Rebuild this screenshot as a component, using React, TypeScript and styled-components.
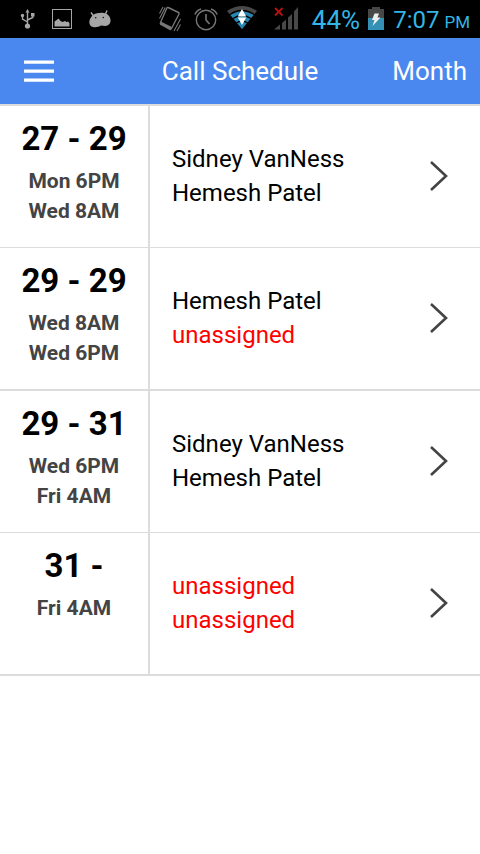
import React from "react";
import styled, { createGlobalStyle } from "styled-components";

const GlobalStyle = createGlobalStyle`
  *, *::before, *::after { box-sizing: border-box; }
  body {
    margin: 0;
    background: #fff;
    color: #000;
    font-family: Roboto, "Noto Sans", sans-serif;
  }
`;

const StatusBar = styled.div`
  display: flex;
  justify-content: space-between;
  align-items: center;
  height: 38px;
  padding: 0 10px 0 20px;
  background: #000;
  color: #33b5e5;
`;

const StatusGroup = styled.div<{ $gap: number; $raised?: boolean }>`
  display: flex;
  align-items: center;
  gap: ${(p) => p.$gap}px;
  padding-bottom: ${(p) => (p.$raised ? 2 : 0)}px;
`;

const Glyph = styled.svg`
  display: block;
  flex: none;
`;

const Battery = styled.div`
  display: flex;
  align-items: center;
  gap: 8px;
  margin-left: 4px;
`;

const Percent = styled.span`
  padding-top: 2px;
  font-size: 26px;
  line-height: 36px;
`;

const Clock = styled.div`
  display: flex;
  align-items: baseline;
  gap: 5px;
  padding-top: 2px;
  font-size: 24px;
  line-height: 36px;
`;

const Meridiem = styled.span`
  font-size: 17px;
  line-height: 20px;
`;

const Header = styled.header`
  display: grid;
  grid-template-columns: 1fr auto 1fr;
  align-items: center;
  height: 68px;
  padding: 0 13px 0 24px;
  background: #4a88ef;
  border-bottom: 2px solid #dcdcdc;
  color: #fff;
`;

const HeaderButton = styled.button<{ $end?: boolean }>`
  justify-self: ${(p) => (p.$end ? "end" : "start")};
  padding: 0;
  border: 0;
  background: none;
  color: inherit;
  font: inherit;
  font-size: 26px;
  line-height: 32px;
  cursor: pointer;
`;

const Title = styled.h1`
  margin: 0 11px 0 0;
  font-size: 26px;
  font-weight: 400;
  line-height: 32px;
`;

const ShiftList = styled.ul`
  margin: 0;
  padding: 0;
  list-style: none;
`;

const ShiftItem = styled.li`
  border-bottom: 1px solid #dcdcdc;

  &:nth-child(even) {
    border-bottom-width: 2px;
  }
`;

const ShiftButton = styled.button`
  display: grid;
  grid-template-columns: 150px 1fr;
  width: 100%;
  min-height: 141px;
  padding: 0;
  border: 0;
  background: #fff;
  color: inherit;
  font: inherit;
  text-align: left;
  cursor: pointer;
`;

const When = styled.span`
  display: flex;
  flex-direction: column;
  align-items: center;
  padding: 11px 0 10px;
  border-right: 2px solid #dcdcdc;
  font-weight: 700;
`;

const Days = styled.span`
  margin-bottom: 5px;
  font-size: 33px;
  line-height: 44px;
`;

const Time = styled.span`
  color: #444;
  font-size: 21px;
  line-height: 30px;
`;

const Who = styled.span`
  display: flex;
  align-items: center;
  justify-content: space-between;
  padding: 0 32px 2px 22px;
`;

const People = styled.span`
  display: flex;
  flex-direction: column;
`;

const Person = styled.span<{ $open: boolean }>`
  color: ${(p) => (p.$open ? "#f00" : "#000")};
  font-size: 24px;
  line-height: 34px;
`;

const shifts = [
  { days: "27 - 29", times: ["Mon 6PM", "Wed 8AM"], people: ["Sidney VanNess", "Hemesh Patel"] },
  { days: "29 - 29", times: ["Wed 8AM", "Wed 6PM"], people: ["Hemesh Patel", null] },
  { days: "29 - 31", times: ["Wed 6PM", "Fri 4AM"], people: ["Sidney VanNess", "Hemesh Patel"] },
  { days: "31 -", times: ["Fri 4AM"], people: [null, null] },
];

const UsbIcon = () => (
  <Glyph width="15" height="20" viewBox="0 0 15 20" aria-hidden="true">
    <g fill="none" stroke="#a6a6a6" strokeWidth="1.4">
      <path d="M7.5 3v13M7.5 13L2.5 10V7M7.5 11L12.8 8.500V6" />
    </g>
    <g fill="#a6a6a6">
      <path d="M7.500 0L9.500 3.500H5.500Z" />
      <circle cx="2.500" cy="6.500" r="1.700" />
      <rect x="11" y="4" width="3.500" height="3.500" />
      <circle cx="7.500" cy="17" r="2.600" />
    </g>
  </Glyph>
);

const PictureIcon = () => (
  <Glyph width="20" height="20" viewBox="0 0 20 20" aria-hidden="true">
    <rect x=".5" y=".5" width="19" height="19" fill="none" stroke="#a6a6a6" />
    <path d="M2.500 17.500V12.500L4 11.500L6.500 9.500L8.500 12L10.500 13L13 12L14.500 13L16 12.500L17.500 14V17.500Z" fill="#a6a6a6" />
  </Glyph>
);

const DebugIcon = () => (
  <Glyph width="22" height="18" viewBox="0 0 22 18" aria-hidden="true">
    <path d="M2 2.500L4.500 6M18 .5L16.500 4" stroke="#a6a6a6" strokeWidth="1.400" />
    <path d="M2 7.500C4 4 7 3 11 3C14 2.500 18 3 20 6C22.500 9.500 22 14 18.500 15.500C16 16.500 14 15.500 12 15.500C10 17 6.500 17.500 4 17C-.5 16 -.5 10.500 2 7.500Z" fill="#a6a6a6" />
    <circle cx="6.700" cy="7.700" r=".8" fill="#111" />
    <circle cx="14.300" cy="7.500" r=".8" fill="#111" />
  </Glyph>
);

const VibrateIcon = () => (
  <Glyph width="22" height="26" viewBox="0 0 22 26" aria-hidden="true">
    <g fill="none" stroke="#777">
      <path d="M9.200 1.500L19.500 6.500Q20.500 7 20 8L12.500 22.500Q12 23.500 11 23L1.800 18Q1 17.500 1.500 16.500L7.800 2.200Q8.300 1 9.200 1.500Z" strokeWidth="1.400" />
      <path d="M4 1L.5 7.500M6.300 1.500L.5 12.500M21.500 13L15 25M21.500 18.500L18 25" strokeWidth="1.100" />
    </g>
    <path d="M1.800 15.500L12.800 21L11.500 24.500L.8 18.500Z" fill="#777" />
  </Glyph>
);

const AlarmIcon = () => (
  <Glyph width="24" height="23" viewBox="0 0 24 23" aria-hidden="true">
    <g fill="none" stroke="#777" strokeWidth="1.400">
      <circle cx="12" cy="12" r="9.700" />
      <path d="M12 6V12L15.500 16" strokeWidth="1.600" />
      <path d="M.8 6.500Q2.500 2.500 7 1M23.200 6.500Q21.500 2.500 17 1" />
    </g>
  </Glyph>
);

const WifiIcon = () => (
  <Glyph width="30" height="24" viewBox="0 0 30 24" aria-hidden="true">
    <path d="M15 23L0 5Q15 -5 30 5Z" fill="#484848" />
    <path d="M15 23L3.500 9Q15 1.500 26.500 9Z" fill="#2389b4" />
    <path d="M2.800 8.500Q15 .5 27.200 8.500M6 12.500Q15 6.500 24 12.500M9.500 17Q15 13 20.500 17" fill="none" stroke="#000" strokeWidth="1.300" />
    <path d="M15 3L19.200 10.500H10.800ZM15 19L10.800 11.500H19.200Z" fill="#fff" />
  </Glyph>
);

const SignalIcon = () => (
  <Glyph width="25" height="23" viewBox="0 0 25 23" aria-hidden="true">
    <path d="M0 22.500L6 17.500V22.500ZM8 16L12 12.500V22.500H8ZM14 10.500L18 7V22.500H14ZM20 4.500L24 0V22.500H20Z" fill="#484848" />
    <path d="M1 1L8.500 8.500M8.500 1L1 8.500" stroke="#b31111" strokeWidth="2" />
  </Glyph>
);

const BatteryIcon = () => (
  <Glyph width="16" height="24" viewBox="0 0 16 24" aria-hidden="true">
    <path d="M4 0H12V2H16V11H0V2H4Z" fill="#484848" />
    <rect y="11" width="16" height="12" fill="#3490b5" />
    <path d="M6.500 6.500H11L9.500 10.500H12.500L4.500 19L6.500 13H4Z" fill="#eee" />
  </Glyph>
);

const MenuIcon = () => (
  <Glyph width="30" height="22" viewBox="0 0 30 22" aria-hidden="true">
    <path d="M0 .5H30V3.800H0ZM0 9.500H30V12.800H0ZM0 18.500H30V21.800H0Z" fill="#fff" />
  </Glyph>
);

const ChevronIcon = () => (
  <Glyph width="18" height="30" viewBox="0 0 18 30" aria-hidden="true">
    <path d="M1 1L16 15L1 29" fill="none" stroke="#444" strokeWidth="2.600" />
  </Glyph>
);

export default function App() {
  return (
    <>
      <GlobalStyle />
      <StatusBar>
        <StatusGroup $gap={17}>
          <UsbIcon />
          <PictureIcon />
          <DebugIcon />
        </StatusGroup>
        <StatusGroup $gap={9}>
          <StatusGroup $gap={13}>
            <VibrateIcon />
            <AlarmIcon />
          </StatusGroup>
          <StatusGroup $gap={17} $raised>
            <WifiIcon />
            <SignalIcon />
          </StatusGroup>
          <Battery>
            <Percent>44%</Percent>
            <BatteryIcon />
          </Battery>
          <Clock>
            7:07 <Meridiem>PM</Meridiem>
          </Clock>
        </StatusGroup>
      </StatusBar>
      <Header>
        <HeaderButton aria-label="Menu">
          <MenuIcon />
        </HeaderButton>
        <Title>Call Schedule</Title>
        <HeaderButton $end>Month</HeaderButton>
      </Header>
      <ShiftList>
        {shifts.map((shift) => (
          <ShiftItem key={shift.days}>
            <ShiftButton>
              <When>
                <Days>{shift.days}</Days>
                {shift.times.map((time) => (
                  <Time key={time}>{time}</Time>
                ))}
              </When>
              <Who>
                <People>
                  {shift.people.map((person, i) => (
                    <Person key={i} $open={person === null}>
                      {person ?? "unassigned"}
                    </Person>
                  ))}
                </People>
                <ChevronIcon />
              </Who>
            </ShiftButton>
          </ShiftItem>
        ))}
      </ShiftList>
    </>
  );
}
